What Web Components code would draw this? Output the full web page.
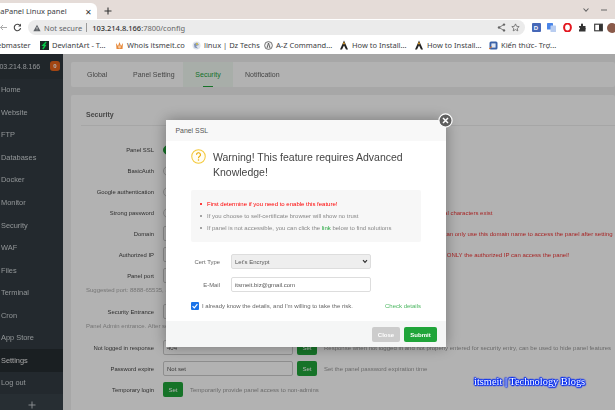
<!DOCTYPE html>
<html><head><meta charset="utf-8"><title>aaPanel Linux panel</title>
<style>html,body{margin:0;padding:0;width:615px;height:410px;overflow:hidden;background:#a8a8a8}</style>
</head><body>
<x-app></x-app>
<script>
const def=(name,css,html)=>{customElements.define(name,class extends HTMLElement{connectedCallback(){if(this.shadowRoot)return;const r=this.attachShadow({mode:'open'});r.innerHTML='<style>'+css+'</style>'+html;}})};

const aMark='<svg width="10" height="10" viewBox="0 0 10 10"><path d="M5 0.5 L1 9.5 H3 L5 5.5 L7 9.5 H9 Z" fill="#222"/><path d="M3.8 4.2 H6.2 L5 1.8Z" fill="#e8a020"/></svg>';

def('x-tabstrip',`:host{display:flex;height:19px;background:#e5dcd8;font:7.5px "Noto Sans",sans-serif;color:#3c4043;align-items:flex-end;overflow:hidden}
.tab{width:97px;height:16px;background:#fff;border-radius:0 6px 0 0;display:flex;align-items:center;justify-content:space-between;padding:0 5px 0 0;box-sizing:border-box;white-space:nowrap}
.t{margin-left:-4px}.x{font-size:8px;color:#333}
.plus{width:22px;height:16px;display:flex;align-items:center;justify-content:center;font-size:12px;color:#333;margin-left:0}
.sp{flex:1}.win{display:flex;gap:10px;height:19px;align-items:center;padding-right:7px}`,
`<div class="tab"><span class="t">aaPanel Linux panel</span><span class="x">✕</span></div><div class="plus">
<svg width="8" height="8" viewBox="0 0 8 8"><path d="M4 .5V7.5M.5 4H7.5" stroke="#333" stroke-width="1.1"/></svg></div><div class="sp"></div>
<div class="win"><svg width="8" height="6" viewBox="0 0 8 6"><path d="M1.5 1.5L4 4.2 6.5 1.5" fill="none" stroke="#666" stroke-width="1.1"/></svg><svg width="8" height="6" viewBox="0 0 8 6"><path d="M1 3H7" stroke="#666" stroke-width="1"/></svg></div>`);

def('x-toolbar',`:host{display:flex;height:17px;background:#fff;align-items:center;font:7.5px "Noto Sans",sans-serif;color:#5f6368;box-sizing:border-box;padding-left:0}
.nav{width:28px;display:flex;align-items:center;justify-content:flex-end;padding-right:6px;box-sizing:border-box;gap:5px}
.omni{width:497px;height:15px;border-radius:8px;background:#ebebeb;display:flex;align-items:center;padding-left:5px;box-sizing:border-box;white-space:nowrap}
.nos{margin-left:3px}.sep{width:1px;height:9px;background:#9a9a9a;margin:0 5px 0 4px}
.host{color:#333;font-weight:500}.path{color:#666}.sp{flex:1}
.r{display:flex;gap:5px;padding-right:5px;align-items:center}
.ext{display:flex;align-items:center;margin-left:7px;gap:6.5px}
.d{width:9px;height:9px;border-radius:1px;background:#4668b8;color:#fff;font:bold 6px "Liberation Sans",sans-serif;display:flex;align-items:center;justify-content:center}`,
`<div class="nav"><svg width="9" height="9" viewBox="0 0 9 9" style="margin-left:-8px"><path d="M8 4.5H1.5M4 2L1.5 4.5 4 7" fill="none" stroke="#aaa" stroke-width="1"/></svg>
<svg width="9" height="9" viewBox="0 0 9 9"><path d="M7.6 5.2A3.2 3.2 0 1 1 6.8 2.3" fill="none" stroke="#444" stroke-width="1.1"/><path d="M8 .6V3.4H5.2Z" fill="#444"/></svg></div>
<div class="omni"><svg width="8" height="8" viewBox="0 0 8 8"><path d="M4 .8L7.6 7.2H.4Z" fill="#5f6368"/><path d="M4 3V5M4 5.6V6.3" stroke="#ebebeb" stroke-width=".8"/></svg>
<span class="nos">Not secure</span><span class="sep"></span><span><span class="host">103.214.8.166</span><span class="path">:7800/config</span></span><span class="sp"></span>
<div class="r"><svg width="9" height="9" viewBox="0 0 9 9"><path d="M7 1.5L2 4.5 7 7.5" fill="none" stroke="#666" stroke-width=".8"/><circle cx="7" cy="1.6" r="1.2" fill="#666"/><circle cx="2" cy="4.5" r="1.2" fill="#666"/><circle cx="7" cy="7.4" r="1.2" fill="#666"/></svg>
<svg width="9" height="9" viewBox="0 0 9 9"><path d="M4.5 .9L5.6 3.3 8.2 3.6 6.3 5.3 6.8 7.9 4.5 6.6 2.2 7.9 2.7 5.3.8 3.6 3.4 3.3Z" fill="none" stroke="#666" stroke-width=".8"/></svg></div></div>
<div class="ext"><span class="d">D</span>
<svg width="9" height="9" viewBox="0 0 9 9"><rect x="0" y="0" width="6" height="6.5" rx=".6" fill="#4a85e8"/><rect x="3.5" y="2.5" width="5.5" height="6.5" rx=".6" fill="#b9cdf0"/></svg>
<svg width="9" height="9" viewBox="0 0 9 9"><ellipse cx="4.5" cy="4.5" rx="3.4" ry="3.9" fill="none" stroke="#e3161e" stroke-width="2"/></svg>
<svg width="9" height="9" viewBox="0 0 9 9"><path d="M1 3H3V1.5A1 1 0 0 1 5 1.5V3H7.5V5A1 1 0 0 1 7.5 6.5V8.5H1V6.5A1 1 0 0 0 1 4.5Z" fill="#333"/></svg>
<svg width="9" height="9" viewBox="0 0 9 9"><rect x=".7" y="1.2" width="7.6" height="6.6" fill="none" stroke="#333" stroke-width="1.1"/><rect x="5" y="1.2" width="3.3" height="6.6" fill="#333"/></svg>
<svg width="9" height="10" viewBox="0 0 9 10" style="margin-left:-3px"><circle cx="6" cy="5" r="5" fill="#8a5a4a"/></svg></div>`);

def('x-bookmarks',`:host{display:flex;height:18px;background:#fff;font:7.5px "Noto Sans",sans-serif;color:#3c4043;align-items:center;overflow:hidden;white-space:nowrap}
.b{display:inline-flex;align-items:center;gap:3px}
.edge{margin-left:-3px;width:43px}.w1{width:75px}.w2{width:77px}.w3{width:72px}.w4{width:75px}.w5{width:75px}.w6{width:75px}`,
`<span class="b edge">ebmaster</span>
<span class="b w1"><svg width="9" height="9" viewBox="0 0 9 9"><rect width="9" height="9" fill="#1c2a26"/><path d="M6.2 1L3 4.4H5.2L2.8 8" fill="none" stroke="#05cc47" stroke-width="1.4"/></svg>DeviantArt - T...</span>
<span class="b w2"><svg width="9" height="9" viewBox="0 0 9 9"><path d="M1 2L3 5 4.5 1 6 5 8 2 7.5 8H1.5Z" fill="#e78a3c"/><circle cx="4.5" cy="6" r="1.4" fill="#f6c9a0"/></svg>Whois itsmeit.co</span>
<span class="b w3"><svg width="9" height="9" viewBox="0 0 9 9"><circle cx="4.5" cy="4.5" r="4" fill="#dfe3ea"/><path d="M2 3L5 1.5 7 4 4 5 6 7.5 2.5 6.5Z" fill="#7f93b8"/><circle cx="5" cy="3" r="1" fill="#d8c040"/></svg>linux | Dz Techs</span>
<span class="b w4"><svg width="9" height="9" viewBox="0 0 9 9"><circle cx="4.5" cy="4.5" r="3.9" fill="#f1f1f1" stroke="#555" stroke-width=".8"/><path d="M3 7L4.5 2 6 7" fill="none" stroke="#555" stroke-width=".9"/></svg>A-Z Command...</span>
<span class="b w5">${aMark}How to Install...</span>
<span class="b w6">${aMark}How to Install...</span>
<span class="b"><svg width="9" height="9" viewBox="0 0 9 9"><rect x=".5" y=".5" width="8" height="8" rx="1.5" fill="#3a62a8"/><rect x="2.4" y="2.4" width="4.2" height="4.2" fill="#dfe7f4"/><path d="M0 8L3 5.5" stroke="#e37a2a"/></svg>Kiến thức- Trợ...</span>`);

def('x-sidebar',`:host{display:flex;flex-direction:column;width:63px;flex:none;background:#333c42;color:#cfd4d8;font:7.4px "Liberation Sans",sans-serif;overflow:hidden}
.ip{height:24.5px;flex:none;display:flex;align-items:center;justify-content:space-between;padding:0 3px 0 0;box-sizing:border-box;white-space:nowrap;font-size:7px;background:#2f373d}
.ip span:first-child{margin-left:-4.5px}.badge{width:10px;height:10px;border-radius:3px;background:#e8641b;color:#fff;font:bold 6px "Liberation Sans",sans-serif;display:flex;align-items:center;justify-content:center}
.it{height:22.55px;display:flex;align-items:center;padding-left:1px;box-sizing:border-box;white-space:nowrap;flex:none}
.on{background:#262d32;color:#e8e8e8}.plus{height:22px;flex:none;display:flex;align-items:center;justify-content:center;background:#39434a}`,
`<div class="ip"><span>103.214.8.166</span><span class="badge">0</span></div>
${['Home','Website','FTP','Databases','Docker','Monitor','Security','WAF','Files','Terminal','Cron','App Store'].map(t=>`<div class="it">${t}</div>`).join('')}
<div class="it on">Settings</div><div class="it">Log out</div>
<div class="plus"><svg width="8" height="8" viewBox="0 0 8 8"><path d="M4 .5V7.5M.5 4H7.5" stroke="#cfd4d8" stroke-width=".9"/></svg></div>`);

def('x-navtabs',`:host{display:flex;height:25px;background:#fff;border-radius:2px;font:7px "Liberation Sans",sans-serif;color:#666;align-items:stretch;white-space:nowrap}
.t{display:flex;align-items:center;flex:none}.g{padding-left:16px;width:62px;box-sizing:border-box}.p{width:50px}
.s{position:relative;width:50px;justify-content:center;background:#f1f9f3;color:#20a53a;margin-right:12px}
.s::after{content:"";position:absolute;bottom:0;left:20px;width:10px;height:1px;background:#20a53a}`,
`<div class="t g">Global</div><div class="t p">Panel Setting</div><div class="t s">Security</div><div class="t">Notification</div>`);

def('x-row',`:host{display:grid;grid-template-columns:73px 130px 20px 1fr;column-gap:9px;height:15px;align-items:center;white-space:nowrap;font:5.9px "Liberation Sans",sans-serif;color:#444}
.l{text-align:right}`,
`<span class="l"><slot name="label"></slot></span><slot></slot>`);

def('x-field',`:host{display:flex;align-items:center;height:15px;box-sizing:border-box;border:1px solid #ccc;border-radius:2px;background:#fff;padding-left:3px;font:6px "Liberation Sans",sans-serif;color:#555}`,`<slot></slot>`);
def('x-set',`:host{display:flex;align-items:center;justify-content:center;width:20px;height:15px;flex:none;background:#20a53a;color:#fff;border-radius:2px;font:6px "Liberation Sans",sans-serif;margin-left:-5px}:host([flush]){margin-left:0}`,`<slot></slot>`);
def('x-toggle',`:host{display:block;width:20px;height:10px;border-radius:5px;box-sizing:border-box;border:1px solid #ccc;background:#fff}:host([on]){background:#20a53a;border-color:#20a53a}`,``);
def('x-help',`:host{display:block;font:6px "Liberation Sans",sans-serif;color:#999;white-space:nowrap;margin-left:-7px}:host([red]){color:#e33}:host([flush]){margin-left:0}`,`<slot></slot>`);

def('x-security',`:host{display:block;background:#fff;border-radius:2px;margin-top:8px;height:400px;padding:0 0 0 10px;box-sizing:border-box;overflow:hidden}
h3{margin:0;font:bold 7px "Liberation Sans",sans-serif;color:#666;height:31px;display:flex;align-items:center;padding:8px 0 0 5px;box-sizing:border-box;border-bottom:1px solid #eee}
.rows{display:flex;flex-direction:column;gap:6px;padding-top:16px}
.note{font:6px "Liberation Sans",sans-serif;color:#aaa;white-space:nowrap;height:9px;line-height:9px;padding-left:5px;margin:-3px 0 3px}
.tmp{grid-column:2/5;display:flex;align-items:center;gap:7px}`,
`<h3>Security</h3><div class="rows">
<x-row><span slot="label">Panel SSL</span><x-toggle on></x-toggle></x-row>
<x-row><span slot="label">BasicAuth</span><x-toggle></x-toggle></x-row>
<x-row><span slot="label">Google authentication</span><x-toggle></x-toggle></x-row>
<x-row><span slot="label">Strong password</span><x-toggle></x-toggle><span></span><x-help red>At least 8 chars of letters, numbers and special characters exist</x-help></x-row>
<x-row><span slot="label">Domain</span><x-field></x-field><x-set>Set</x-set><x-help red>After binding to the panel domain name, you can only use this domain name to access the panel after setting</x-help></x-row>
<x-row><span slot="label">Authorized IP</span><x-field></x-field><x-set>Set</x-set><x-help red>Multiple IPs can be separated using commas, ONLY the authorized IP can access the panel!</x-help></x-row>
<x-row><span slot="label">Panel port</span><x-field>7800</x-field><x-set>Set</x-set></x-row>
<div class="note">Suggested port: 8888-65535, and confirm the firewall is open</div>
<x-row><span slot="label">Security Entrance</span><x-field></x-field><x-set>Set</x-set></x-row>
<div class="note">Panel Admin entrance. After setting, can only be accessed through the entrance</div>
<x-row><span slot="label">Not logged in response</span><x-field>404</x-field><x-set>Set</x-set><x-help>Response when not logged in and not properly entered for security entry, can be used to hide panel features</x-help></x-row>
<x-row><span slot="label">Password expire</span><x-field>Not set</x-field><x-set>Set</x-set><x-help>Set the panel password expiration time</x-help></x-row>
<x-row><span slot="label">Temporary login</span><div class="tmp"><x-set flush>Set</x-set><x-help flush>Temporarily provide panel access to non-admins</x-help></div></x-row>
</div>`);

def('x-main',`:host{display:block;flex:1;min-width:0;background:#f0f0f0;padding:8px 0 0 8px;overflow:hidden;box-sizing:border-box}`,`<x-navtabs></x-navtabs><x-security></x-security>`);

def('x-modal',`:host{position:absolute;left:166px;top:66px;width:280px;height:227px;background:#fff;display:flex;flex-direction:column;box-shadow:0 0 14px rgba(0,0,0,.35);font:6px "Liberation Sans",sans-serif;color:#555}
.head{height:21px;flex:none;background:#f8f8f8;display:flex;align-items:center;padding-left:9.5px;font-size:6.9px;color:#555;box-sizing:border-box}
.close{position:absolute;right:-7px;top:-7px;width:15px;height:15px}
.body{flex:1;padding:8.5px 25px 0}
.warn{display:flex;gap:7px;align-items:flex-start;font-size:10.5px;line-height:15px;color:#444}
.warn svg{flex:none;margin-top:-.5px}
.box{margin-top:10.5px;height:52px;background:#f7f7f7;border-radius:2px;padding:7.5px 0 0 16px;box-sizing:border-box;color:#888;line-height:12px}
.li{position:relative;white-space:nowrap}.li::before{content:"";position:absolute;left:-7.5px;top:5px;width:2px;height:2px;border-radius:1px;background:currentColor}
.red{color:#f00}.lk{color:#20a53a}
.fr{display:flex;align-items:center;height:15px;margin-top:8px}
.fr label{width:29px;text-align:right;margin-right:11px;color:#666;white-space:nowrap;font-size:5.9px}
.ctl{width:140px;height:15px;box-sizing:border-box;border:1px solid #ddd;border-radius:2px;display:flex;align-items:center;justify-content:space-between;padding:0 2px 0 3px;color:#555;font-size:6px}
.sel{background:#eee}
.chk{display:flex;align-items:center;height:14px;margin-top:7px;justify-content:space-between;white-space:nowrap;color:#666}
.chk span.c{display:flex;align-items:center;gap:3px}
.cb{width:8px;height:8px;display:block}
.det{color:#20a53a;opacity:.8;font-size:6px}
.foot{height:26px;flex:none;background:#f5f6f6;display:flex;justify-content:flex-end;gap:4px;padding:6px 9px 0 0;box-sizing:border-box}
.btn{height:15px;border-radius:2px;display:flex;align-items:center;justify-content:center;color:#fff;font-weight:bold;font-size:6px;box-sizing:border-box}
.cl{width:28px;background:#ccc}.sb{width:33px;background:#20a53a}`,
`<div class="head">Panel SSL</div>
<svg class="close" viewBox="0 0 15 15"><circle cx="7.5" cy="7.5" r="6.6" fill="#5e5e5e" stroke="#fff" stroke-width="1.2"/><path d="M5 5L10 10M10 5L5 10" stroke="#fff" stroke-width="1.5"/></svg>
<div class="body">
<div class="warn"><svg width="15" height="15" viewBox="0 0 16 16"><circle cx="8" cy="8" r="7.2" fill="#fffdf3" stroke="#f5c93a" stroke-width="1.1"/><path d="M5.9 6.2A2.1 2.1 0 1 1 8.9 8C8.2 8.5 8 8.8 8 9.8" fill="none" stroke="#e8a800" stroke-width="1.2"/><circle cx="8" cy="11.7" r=".8" fill="#e8a800"/></svg><span>Warning! This feature requires Advanced Knowledge!</span></div>
<div class="box"><div class="li red">First determine if you need to enable this feature!</div><div class="li">If you choose to self-certificate browser will show no trust</div><div class="li">If panel is not accessible, you can click the <span class="lk">link</span> below to find solutions</div></div>
<div class="fr" style="margin-top:12px"><label>Cert Type</label><div class="ctl sel"><span>Let's Encrypt</span><svg width="6" height="5" viewBox="0 0 6 5"><path d="M1 1.2L3 3.4 5 1.2" fill="none" stroke="#333" stroke-width="1.2"/></svg></div></div>
<div class="fr"><label>E-Mail</label><div class="ctl">itsmeit.biz@gmail.com</div></div>
<div class="chk"><span class="c"><svg class="cb" viewBox="0 0 8 8"><rect width="8" height="8" rx="1" fill="#1a73e8"/><path d="M1.6 4.2L3.3 5.9 6.4 2.2" fill="none" stroke="#fff" stroke-width="1.2"/></svg>I already know the details, and I'm willing to take the risk.</span><span class="det">Check details</span></div>
</div>
<div class="foot"><div class="btn cl">Close</div><div class="btn sb">Submit</div></div>`);

def('x-app',`:host{display:flex;flex-direction:column;width:615px;height:410px;overflow:hidden;position:relative;filter:blur(.5px)}
.page{flex:1;display:flex;position:relative;min-height:0;overflow:hidden}
.ov{position:absolute;inset:0;background:rgba(0,0,0,.3)}
.wm{position:absolute;left:474px;top:322px;font:10.4px "Liberation Serif",serif;color:#fff;white-space:nowrap;text-shadow:0 0 1px #0a30f0,0 0 2px #0a30f0,0 0 2px #0a30f0,1px 0 1px #0a30f0,-1px 0 1px #0a30f0,0 1px 1px #0a30f0,0 -1px 1px #0a30f0,1px 1px 1px #0a30f0,-1px -1px 1px #0a30f0}`,
`<x-tabstrip></x-tabstrip><x-toolbar></x-toolbar><x-bookmarks></x-bookmarks>
<div class="page"><x-sidebar></x-sidebar><x-main></x-main><div class="ov"></div><x-modal></x-modal><div class="wm">itsmeit | Technology Blogs</div></div>`);
</script>
</body></html>
